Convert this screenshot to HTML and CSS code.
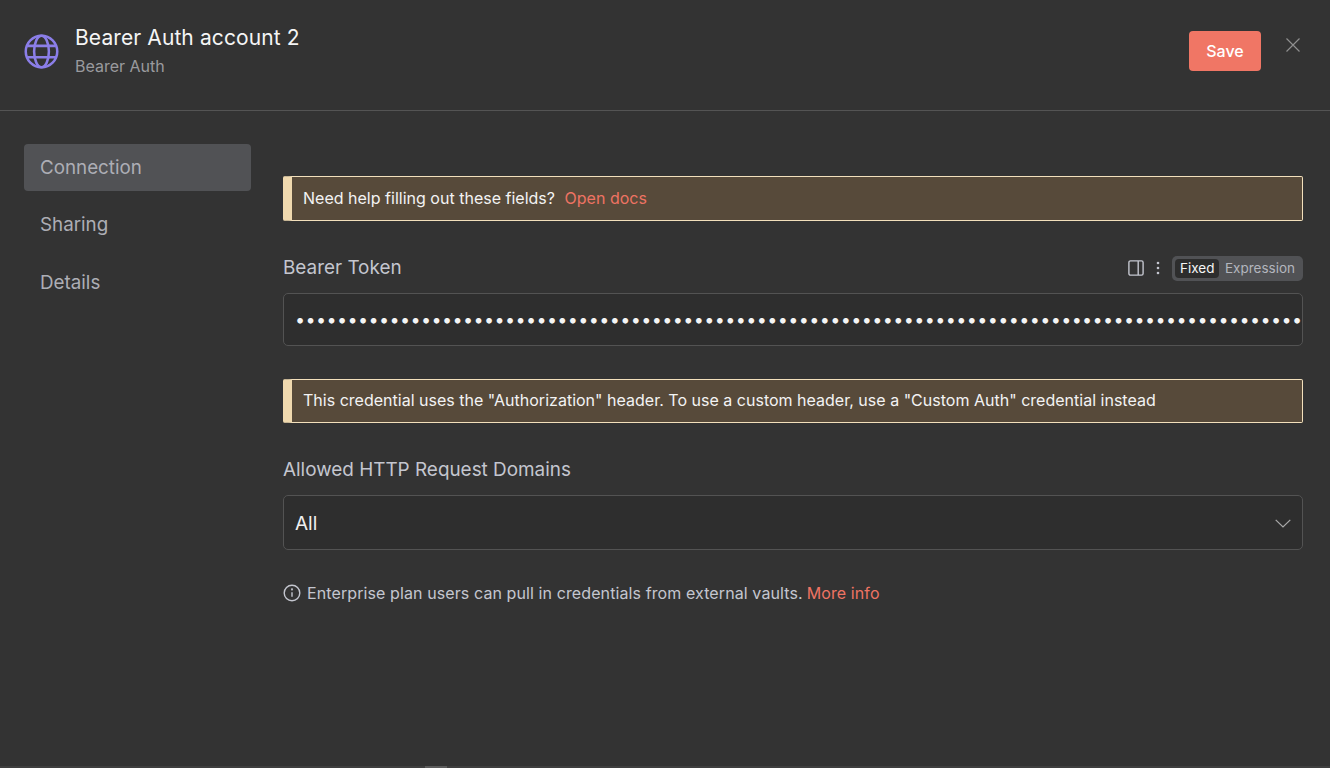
FILE: index.html
```html
<!DOCTYPE html>
<html lang="en">
<head>
<meta charset="utf-8">
<title>Bearer Auth account 2</title>
<link rel="stylesheet" href="styles.css">
</head>
<body>
<div class="modal">
  <header class="header">
    <div class="identity">
      <svg class="globe" viewBox="0 0 36 36" fill="none" stroke="#8b7ee8" stroke-width="2.6">
        <circle cx="18" cy="18" r="16.2"/>
        <ellipse cx="18" cy="18" rx="7.6" ry="16.2"/>
        <path d="M3.5 12.2h29M3.5 23.8h29"/>
      </svg>
      <div class="titles">
        <div class="title">Bearer Auth account 2</div>
        <div class="subtitle">Bearer Auth</div>
      </div>
    </div>
    <div class="actions">
      <button class="save">Save</button>
      <svg class="close" viewBox="0 0 14 14" fill="none" stroke="#8f8f8f" stroke-width="1.2"><path d="M0.5 0.5l13 13M13.5 0.5l-13 13"/></svg>
    </div>
  </header>
  <div class="body">
    <nav class="nav">
      <div class="nav-item active">Connection</div>
      <div class="nav-item">Sharing</div>
      <div class="nav-item">Details</div>
    </nav>
    <main class="content">
      <div class="callout callout-first"><span>Need help filling out these fields?</span><a class="link docs">Open docs</a></div>
      <div class="field-head">
        <label class="label">Bearer Token</label>
        <div class="field-tools">
          <svg class="panel-icon" viewBox="0 0 16 16" fill="none" stroke="#c4c6cf" stroke-width="1.4"><rect x="0.9" y="0.9" width="14.2" height="14.2" rx="1.6"/><path d="M10.2 1v14"/></svg>
          <svg class="dots-icon" viewBox="0 0 4 14" fill="#c4c6cf"><circle cx="2" cy="2" r="1.3"/><circle cx="2" cy="7" r="1.3"/><circle cx="2" cy="12" r="1.3"/></svg>
          <div class="toggle"><span class="toggle-on">Fixed</span><span class="toggle-off">Expression</span></div>
        </div>
      </div>
      <div class="input token"><span class="dots">••••••••••••••••••••••••••••••••••••••••••••••••••••••••••••••••••••••••••••••••••••••••••••••••</span></div>
      <div class="callout callout-second"><span>This credential uses the "Authorization" header. To use a custom header, use a "Custom Auth" credential instead</span></div>
      <label class="label domains-label">Allowed HTTP Request Domains</label>
      <div class="input select">
        <span>All</span>
        <svg class="chevron" viewBox="0 0 16 9" fill="none" stroke="#a8a8a8" stroke-width="1.3"><path d="M0.7 0.9l7.3 7 7.3-7"/></svg>
      </div>
      <div class="note">
        <svg class="info" viewBox="0 0 18 18" fill="none" stroke="#c4c6cf" stroke-width="1.4"><circle cx="9" cy="9" r="7.8"/><path d="M9 8.2v4.6"/><circle cx="9" cy="5.4" r="0.4" fill="#c4c6cf"/></svg>
        <span>Enterprise plan users can pull in credentials from external vaults.</span><a class="link">More info</a>
      </div>
    </main>
  </div>
  <div class="bottom-strip"><span class="handle"></span></div>
</div>
</body>
</html>
```
FILE: styles.css
```css
* { box-sizing: border-box; }
html, body { margin: 0; height: 100%; }
body {
  background: #333333;
  color: #f2f2f2;
  font-family: Inter, "Liberation Sans", sans-serif;
  overflow: hidden;
}
.modal { height: 768px; display: flex; flex-direction: column; }
.header {
  height: 111px;
  flex: none;
  border-bottom: 1px solid #545454;
  display: flex;
  justify-content: space-between;
  padding: 0 30px 0 24px;
}
.identity { display: flex; gap: 16px; align-items: flex-start; padding-top: 25px; }
.globe { width: 35px; height: 35px; margin-top: 9px; flex: none; }
.titles { display: flex; flex-direction: column; }
.title { font-size: 21px; line-height: 26px; letter-spacing: 0.1px; color: #f5f5f5; }
.subtitle { font-size: 16px; line-height: 20px; margin-top: 5px; color: #9a9a9e; }
.actions { display: flex; align-items: flex-start; gap: 25px; padding-top: 31px; }
.save {
  width: 72px;
  height: 40px;
  border: 0;
  border-radius: 4px;
  background: #f07665;
  color: #fff;
  font: 500 16px Inter, "Liberation Sans", sans-serif;
}
.close { width: 14px; height: 14px; margin-top: 7px; }
.body { flex: 1; display: flex; padding: 33px 27px 0 24px; min-height: 0; }
.nav { width: 227px; flex: none; display: flex; flex-direction: column; gap: 11px; }
.nav-item {
  height: 46.5px;
  padding: 0 16px;
  display: flex;
  align-items: center;
  font-size: 18.8px;
  color: #adaeb5;
  border-radius: 4px;
}
.active { background: #515255; }
.content { flex: 1; margin-left: 32px; min-width: 0; padding-top: 32px; display: flex; flex-direction: column; }
.callout {
  height: 45px;
  flex: none;
  display: flex;
  align-items: center;
  background: #574a3a;
  border: 1px solid #f3e0bc;
  border-left: 9px solid #f0d9ae;
  border-radius: 2px;
  padding: 0 0 1px 11px;
  font-size: 16px;
  letter-spacing: 0.01px;
  color: #f3f3f3;
  white-space: nowrap;
}
.link { color: #ee7363; }
.docs { margin-left: 9.5px; }
.field-head { display: flex; justify-content: space-between; align-items: center; height: 26px; margin-top: 34px; }
.label { font-size: 18.9px; color: #c4c6cf; line-height: 26px; }
.field-tools { display: flex; align-items: center; }
.panel-icon { width: 16px; height: 16px; }
.dots-icon { width: 4px; height: 14px; margin-left: 12px; }
.toggle {
  margin-left: 12px;
  height: 25px;
  padding: 3px;
  background: #515255;
  border-radius: 5px;
  display: flex;
  align-items: center;
  font-size: 13.5px;
}
.toggle-on { height: 19px; line-height: 19px; padding: 0 4.5px; background: #2d2d2d; border-radius: 4px; color: #f5f5f5; }
.toggle-off { padding: 0 5px 0 6px; color: #b3b5bd; }
.input {
  background: #2e2e2e;
  border: 1px solid #535353;
  border-radius: 5px;
  display: flex;
  align-items: center;
}
.token { height: 53px; margin-top: 12px; padding-left: 11px; flex: none; }
.dots { font-size: 18px; letter-spacing: 0.37px; white-space: nowrap; color: #f5f5f5; }
.callout-second { margin-top: 33px; height: 44px; padding-bottom: 2px; }
.domains-label { margin-top: 34px; }
.select { height: 55px; margin-top: 12px; padding: 2px 11px 0; justify-content: space-between; font-size: 19px; color: #f0f0f0; flex: none; }
.chevron { width: 16px; height: 9px; }
.note { display: flex; align-items: center; margin-top: 33px; font-size: 16px; letter-spacing: 0.1px; color: #c4c6cf; white-space: nowrap; }
.info { width: 18px; height: 18px; margin-right: 6px; }
.note .link { margin-left: 4px; }
.bottom-strip { height: 2px; flex: none; background: #3f3f3f; display: flex; padding-left: 425px; }
.handle { width: 22px; height: 2px; background: #5c5c5c; }
```
